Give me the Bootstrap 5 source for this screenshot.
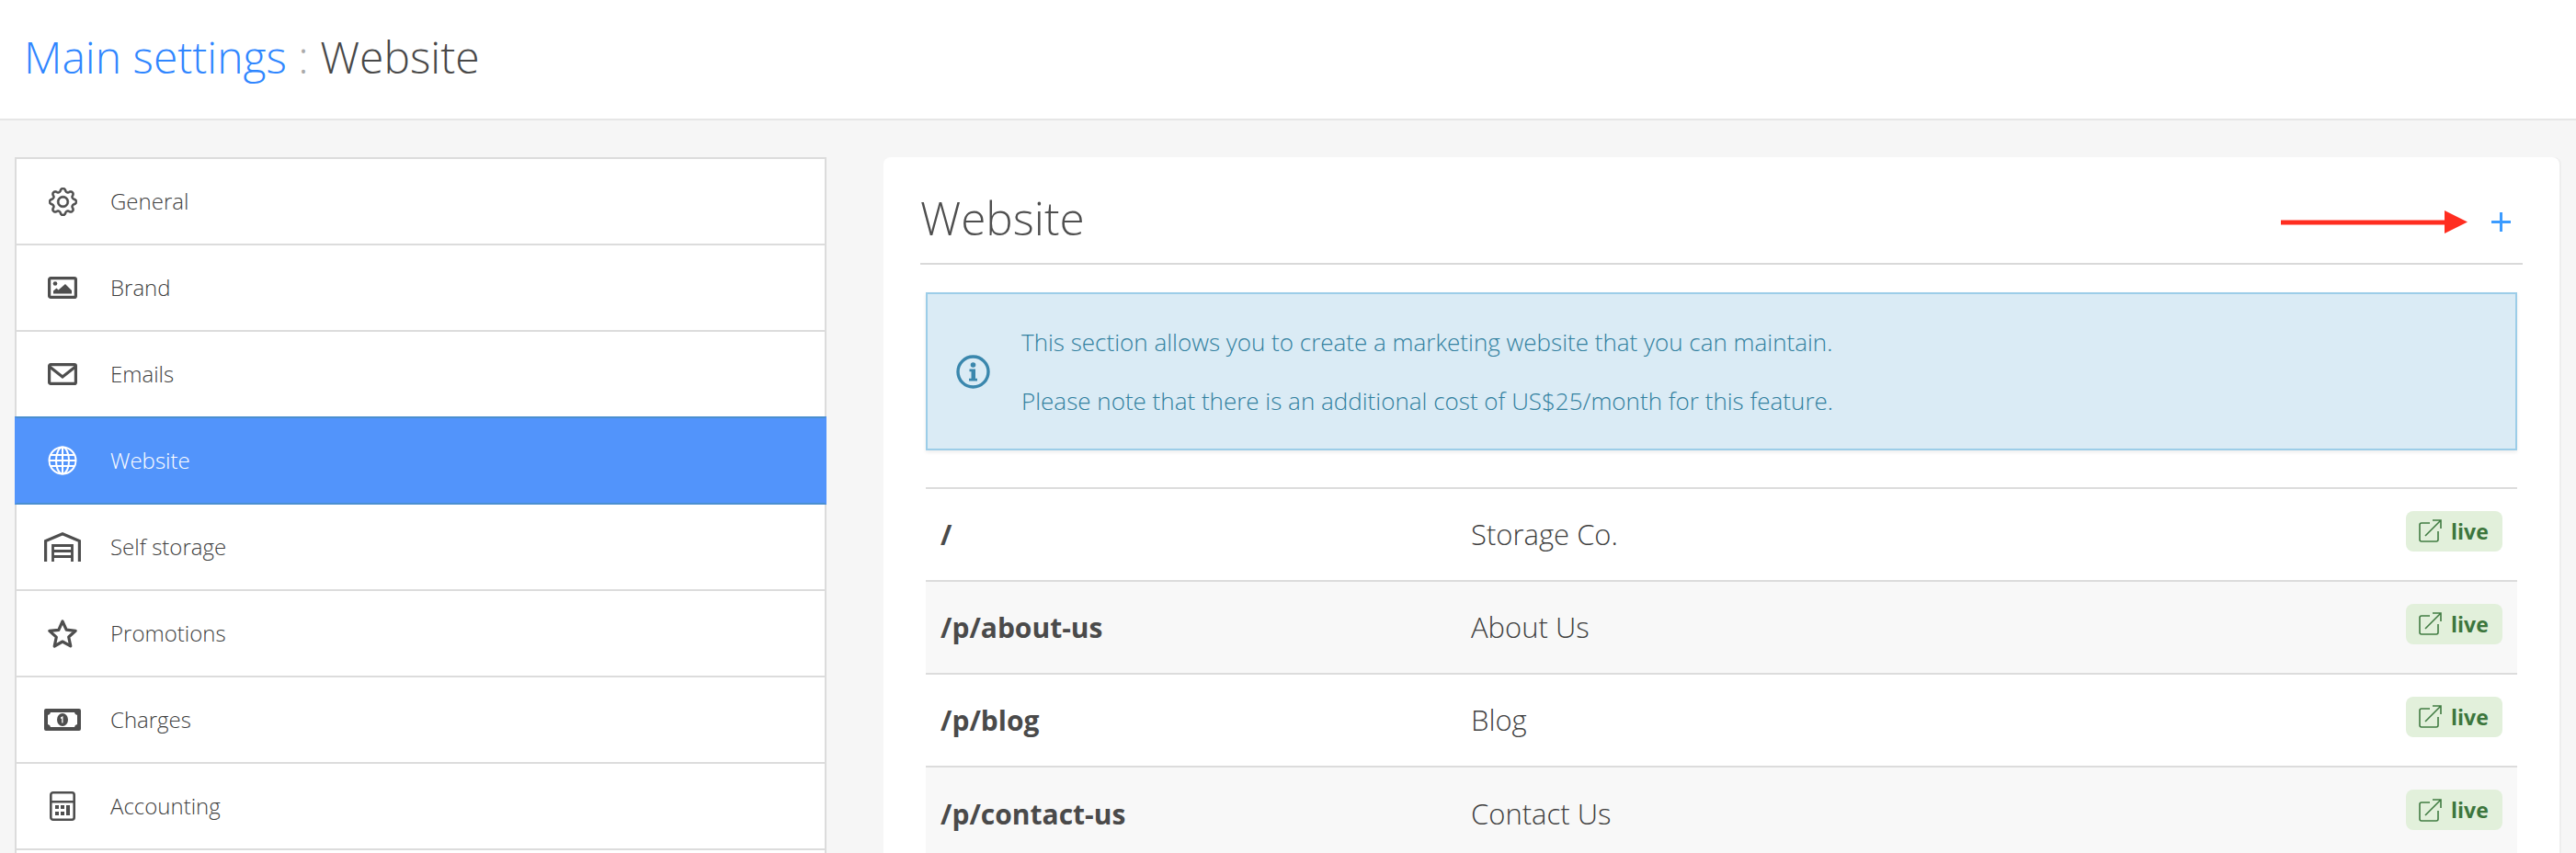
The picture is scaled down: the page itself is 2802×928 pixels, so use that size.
<!DOCTYPE html>
<html lang="en">
<head>
<meta charset="utf-8">
<title>Main settings : Website</title>
<link href="https://cdn.jsdelivr.net/npm/bootstrap@5.3.0/dist/css/bootstrap.min.css" rel="stylesheet">
<style>
html,body{height:928px;overflow:hidden}
body{background:#f6f6f6;font-family:"Open Sans","Noto Sans",sans-serif;font-weight:300;color:#444}
.top-strip{height:131px;background:#fff;border-bottom:2px solid #e6e6e6;padding:0 0 6px 26px}
.top-strip h1{font-size:48px;font-weight:300;margin:0;color:#484848}
.top-strip a{color:#2f86ff;text-decoration:none}
.top-strip .sep{color:#aaa}
.page-wrap{padding:40px 18px 0 16px;gap:62px}
.side-col{width:883px;flex:none}
.main-col{flex:1 1 auto;min-width:0}
.side-list{border-radius:0;--bs-list-group-border-width:2px;--bs-list-group-border-color:#dcdcdc}
.side-list .list-group-item{height:94px;padding:0 0 0 28px;display:flex;align-items:center;font-size:24px;color:#3f3f3f;font-weight:300}
.side-list .list-group-item:first-child{height:96px}
.side-list .list-group-item.active{height:96px;background:#5294fb;border-color:#4a8fd0 #5294fb;color:#fff;margin-top:-2px;border-top-width:2px;z-index:2}
.ico-box{width:44px;display:flex;justify-content:center;margin-right:30px;flex:none}
.panel-box{background:#fff;border-radius:8px 8px 0 0;box-shadow:2px 0 0 #eee;padding:0 40px 0 40px;height:900px;position:relative}
.panel-head{height:117px;border-bottom:2px solid #d9d9d9;display:flex;align-items:center;justify-content:space-between}
.panel-head h2{font-size:49.500px;font-weight:200;margin:0 0 -19px 0;color:#4e4e4e}
.plus-link{width:21px;height:21px;display:block;margin:26px 13px 0 0}
.red-arrow{position:absolute;left:1520px;top:58px}
.note-box{margin:30px 6px 0;height:172px;border:2px solid #9ccde8;background:#daebf5;border-radius:0;color:#31809f;padding:0 0 0 31px;box-shadow:0 2px 4px rgba(0,0,0,.08);font-size:26px;font-weight:300}
.note-box p{margin:0;line-height:36px}
.note-box p+p{margin-top:28px}
.note-text{margin-left:10px}
.page-table{margin:40px 6px 0;width:calc(100% - 12px);table-layout:fixed;font-size:31px;--bs-table-bg:transparent}
.page-table td{height:101px;padding:0 16px;border-top:2px solid #dcdcdc;border-bottom:0;vertical-align:middle;color:#3f3f3f;font-weight:300}
.page-table td:first-child{font-weight:700;font-size:30px;width:577px;color:#4a4a4a}
.page-table td:last-child{width:160px;text-align:right}
.page-table tr.alt td{background:#f8f8f8}
.live-tag{display:inline-flex;align-items:center;gap:10px;width:105px;height:44px;padding-left:14px;background:#e2f0db;color:#3c763d;border-radius:8px;font-size:23px;font-weight:700;margin-bottom:8px;vertical-align:middle}
</style>
</head>
<body>
<header class="top-strip d-flex align-items-center">
  <h1><a href="#">Main settings</a> <span class="sep">:</span> Website</h1>
</header>
<div class="page-wrap d-flex">
  <aside class="side-col">
    <div class="list-group side-list">
      <a href="#" class="list-group-item list-group-item-action"><span class="ico-box">
        <svg width="31" height="31" viewBox="0 0 16 16" fill="#4e4e4e" stroke="#4e4e4e" stroke-width=".35"><path d="M8 4.754a3.246 3.246 0 1 0 0 6.492 3.246 3.246 0 0 0 0-6.492zM5.754 8a2.246 2.246 0 1 1 4.492 0 2.246 2.246 0 0 1-4.492 0z"/><path d="M9.796 1.343c-.527-1.79-3.065-1.79-3.592 0l-.094.319a.873.873 0 0 1-1.255.52l-.292-.16c-1.64-.892-3.433.902-2.54 2.541l.159.292a.873.873 0 0 1-.52 1.255l-.319.094c-1.79.527-1.79 3.065 0 3.592l.319.094a.873.873 0 0 1 .52 1.255l-.16.292c-.892 1.64.901 3.434 2.541 2.54l.292-.159a.873.873 0 0 1 1.255.52l.094.319c.527 1.79 3.065 1.79 3.592 0l.094-.319a.873.873 0 0 1 1.255-.52l.292.16c1.64.893 3.434-.902 2.54-2.541l-.159-.292a.873.873 0 0 1 .52-1.255l.319-.094c1.79-.527 1.79-3.065 0-3.592l-.319-.094a.873.873 0 0 1-.52-1.255l.16-.292c.893-1.64-.902-3.433-2.541-2.54l-.292.159a.873.873 0 0 1-1.255-.52l-.094-.319zm-2.633.283c.246-.835 1.428-.835 1.674 0l.094.319a1.873 1.873 0 0 0 2.693 1.115l.291-.16c.764-.415 1.6.42 1.184 1.185l-.159.292a1.873 1.873 0 0 0 1.116 2.692l.318.094c.835.246.835 1.428 0 1.674l-.319.094a1.873 1.873 0 0 0-1.115 2.693l.16.291c.415.764-.42 1.6-1.185 1.184l-.291-.159a1.873 1.873 0 0 0-2.693 1.116l-.094.318c-.246.835-1.428.835-1.674 0l-.094-.319a1.873 1.873 0 0 0-2.692-1.115l-.292.16c-.764.415-1.6-.42-1.184-1.185l.159-.291A1.873 1.873 0 0 0 1.945 8.93l-.319-.094c-.835-.246-.835-1.428 0-1.674l.319-.094A1.873 1.873 0 0 0 3.06 4.377l-.16-.292c-.415-.764.42-1.6 1.185-1.184l.292.159a1.873 1.873 0 0 0 2.692-1.115l.094-.319z"/></svg>
      </span>General</a>
      <a href="#" class="list-group-item list-group-item-action"><span class="ico-box">
        <svg width="32" height="24" viewBox="0 0 32 24"><rect x="1.600" y="1.600" width="28.800" height="20.800" rx="1.500" fill="none" stroke="#4e4e4e" stroke-width="3.200"/><circle cx="8" cy="7.500" r="2.300" fill="#4e4e4e"/><path d="M6 18.500v-3l3.500-3 2 2L19 8l7 7v3.500z" fill="#4e4e4e"/></svg>
      </span>Brand</a>
      <a href="#" class="list-group-item list-group-item-action"><span class="ico-box">
        <svg width="32" height="24" viewBox="0 0 32 24" fill="none" stroke="#4e4e4e" stroke-width="3.200"><rect x="1.600" y="1.600" width="28.800" height="20.800" rx="1.500"/><path d="M2 4l14 11L30 4"/></svg>
      </span>Emails</a>
      <a href="#" class="list-group-item list-group-item-action active" aria-current="true"><span class="ico-box">
        <svg width="32" height="32" viewBox="0 0 32 32" fill="none" stroke="#fff" stroke-width="2"><circle cx="16" cy="16" r="14.500"/><ellipse cx="16" cy="16" rx="7" ry="14.500"/><path d="M3 10h26M3 22h26M16 1.500v29M1.500 16h29"/></svg>
      </span>Website</a>
      <a href="#" class="list-group-item list-group-item-action"><span class="ico-box">
        <svg width="40" height="32" viewBox="0 0 40 32" fill="none" stroke="#4e4e4e" stroke-width="3.200"><path d="M1.600 32V9.500L20 1.800l18.400 7.700V32"/><path d="M9.500 32V14.500h21V32M9.500 20.500h21M9.500 26.500h21" stroke-width="2.800"/></svg>
      </span>Self storage</a>
      <a href="#" class="list-group-item list-group-item-action"><span class="ico-box">
        <svg width="34" height="33" viewBox="0 0 34 33" fill="none" stroke="#4e4e4e" stroke-width="3.200" stroke-linejoin="round"><path d="M17 3l4.200 9.200 10 1.100-7.500 6.700 2.100 9.900L17 25l-8.800 5 2.100-9.900-7.500-6.700 10-1.100z"/></svg>
      </span>Promotions</a>
      <a href="#" class="list-group-item list-group-item-action"><span class="ico-box">
        <svg width="40" height="24" viewBox="0 0 40 24"><path fill="#4e4e4e" fill-rule="evenodd" d="M2 0h36a2 2 0 0 1 2 2v20a2 2 0 0 1-2 2H2a2 2 0 0 1-2-2V2a2 2 0 0 1 2-2zm5 4a3.500 3.500 0 0 1-3 3v10a3.500 3.500 0 0 1 3 3h26a3.500 3.500 0 0 1 3-3V7a3.500 3.500 0 0 1-3-3z"/><ellipse cx="20" cy="12" rx="6" ry="7" fill="#4e4e4e"/><path d="M18 9.500l2.500-1.500v7.500h-1.300V10.500l-1.200.5z" fill="#fff"/></svg>
      </span>Charges</a>
      <a href="#" class="list-group-item list-group-item-action"><span class="ico-box">
        <svg width="28" height="32" viewBox="0 0 28 32"><rect x="1.300" y="1.300" width="25.400" height="29.400" rx="2.500" fill="none" stroke="#4e4e4e" stroke-width="2.600"/><path fill="#4e4e4e" d="M1 10h26v2.600H1zM6 15h4v4H6zM12 15h4v4h-4zM18 15h4v11h-4zM6 22h4v4H6zM12 22h4v4h-4z"/></svg>
      </span>Accounting</a>
      <div class="list-group-item"></div>
    </div>
  </aside>
  <main class="main-col">
    <section class="panel-box">
      <div class="panel-head">
        <h2>Website</h2>
        <a href="#" class="plus-link" aria-label="Add"><svg width="21" height="21" viewBox="0 0 21 21" class="d-block" fill="#3b9bff"><path d="M9 0h3v21H9z"/><path d="M0 9h21v3H0z"/></svg></a>
      </div>
      <svg class="red-arrow" width="203" height="26" viewBox="0 0 203 26" fill="#ff2d20"><path d="M0 10.500h180v5H0z"/><path d="M178 0l25 12.500L178 25z"/></svg>
      <div class="alert note-box d-flex align-items-center" role="alert">
        <svg width="37" height="37" viewBox="0 0 37 37" class="flex-shrink-0 me-4" fill="none"><circle cx="18.500" cy="18.500" r="16.500" stroke="#3a87ad" stroke-width="3.400"/><circle cx="18.500" cy="11" r="2.800" fill="#3a87ad"/><path fill="#3a87ad" d="M14.500 15.500h6.500v10.200h2v2.800H14v-2.800h2.500v-7.400h-2z"/></svg>
        <div class="note-text">
          <p>This section allows you to create a marketing website that you can maintain.</p>
          <p>Please note that there is an additional cost of US$25/month for this feature.</p>
        </div>
      </div>
      <table class="table page-table">
        <tbody>
          <tr><td>/</td><td>Storage Co.</td><td><a href="#" class="live-tag text-decoration-none"><svg width="25" height="25" viewBox="0 0 25 25" fill="none" stroke="#417c43" stroke-width="1.600"><path d="M12 4H3a2 2 0 0 0-2 2v16a2 2 0 0 0 2 2h16a2 2 0 0 0 2-2V13M7 18L24 1M15 1h9v9"/></svg>live</a></td></tr>
          <tr class="alt"><td>/p/about-us</td><td>About Us</td><td><a href="#" class="live-tag text-decoration-none"><svg width="25" height="25" viewBox="0 0 25 25" fill="none" stroke="#417c43" stroke-width="1.600"><path d="M12 4H3a2 2 0 0 0-2 2v16a2 2 0 0 0 2 2h16a2 2 0 0 0 2-2V13M7 18L24 1M15 1h9v9"/></svg>live</a></td></tr>
          <tr><td>/p/blog</td><td>Blog</td><td><a href="#" class="live-tag text-decoration-none"><svg width="25" height="25" viewBox="0 0 25 25" fill="none" stroke="#417c43" stroke-width="1.600"><path d="M12 4H3a2 2 0 0 0-2 2v16a2 2 0 0 0 2 2h16a2 2 0 0 0 2-2V13M7 18L24 1M15 1h9v9"/></svg>live</a></td></tr>
          <tr class="alt"><td>/p/contact-us</td><td>Contact Us</td><td><a href="#" class="live-tag text-decoration-none"><svg width="25" height="25" viewBox="0 0 25 25" fill="none" stroke="#417c43" stroke-width="1.600"><path d="M12 4H3a2 2 0 0 0-2 2v16a2 2 0 0 0 2 2h16a2 2 0 0 0 2-2V13M7 18L24 1M15 1h9v9"/></svg>live</a></td></tr>
        </tbody>
      </table>
    </section>
  </main>
</div>
<script src="https://cdn.jsdelivr.net/npm/bootstrap@5.3.0/dist/js/bootstrap.bundle.min.js"></script>
</body>
</html>
